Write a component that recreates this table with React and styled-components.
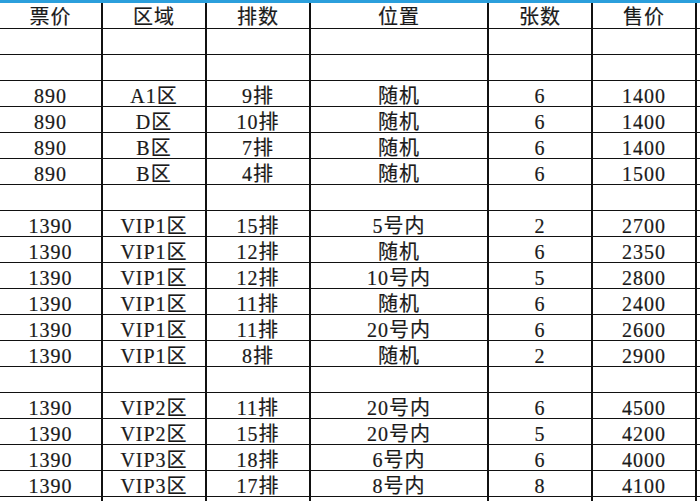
import React from "react";
import styled, { createGlobalStyle } from "styled-components";

const Global = createGlobalStyle`
  html, body { margin: 0; padding: 0; background: #fff; overflow: hidden; }
  body { font-family: "Liberation Serif", "Noto Sans CJK SC", serif; }
`;

const Page = styled.div`
  width: 700px;
  height: 501px;
  overflow: hidden;
  background: #fff;
  border-top: 3px solid #2b9fdc;
`;

const Sheet = styled.div`
  display: grid;
  grid-template-columns: 103px 104px 104px 178px 104px 104px 1fr;
  grid-auto-rows: 26px;
`;

const Cell = styled.div`
  box-sizing: border-box;
  border-right: 2px solid #111;
  border-bottom: 1px solid #111;
  display: flex;
  align-items: center;
  justify-content: center;
  padding-top: ${(p) => (p.$head ? "3px" : "5px")};
  font-size: 20px;
  line-height: 1;
  color: #1a1a1a;
  white-space: nowrap;
  font-weight: 400;
  letter-spacing: 1px;
  -webkit-text-stroke: 0.2px #1a1a1a;
`;

const Tail = styled(Cell)`
  border-right: none;
`;

const head = ["票价", "区域", "排数", "位置", "张数", "售价"];
const rows = [
  null,
  null,
  ["890", "A1区", "9排", "随机", "6", "1400"],
  ["890", "D区", "10排", "随机", "6", "1400"],
  ["890", "B区", "7排", "随机", "6", "1400"],
  ["890", "B区", "4排", "随机", "6", "1500"],
  null,
  ["1390", "VIP1区", "15排", "5号内", "2", "2700"],
  ["1390", "VIP1区", "12排", "随机", "6", "2350"],
  ["1390", "VIP1区", "12排", "10号内", "5", "2800"],
  ["1390", "VIP1区", "11排", "随机", "6", "2400"],
  ["1390", "VIP1区", "11排", "20号内", "6", "2600"],
  ["1390", "VIP1区", "8排", "随机", "2", "2900"],
  null,
  ["1390", "VIP2区", "11排", "20号内", "6", "4500"],
  ["1390", "VIP2区", "15排", "20号内", "5", "4200"],
  ["1390", "VIP3区", "18排", "6号内", "6", "4000"],
  ["1390", "VIP3区", "17排", "8号内", "8", "4100"],
  null,
];

export default function App() {
  return (
    <>
      <Global />
      <Page>
        <Sheet>
          {head.map((h) => (
            <Cell key={h} $head>
              {h}
            </Cell>
          ))}
          <Tail $head />
          {rows.map((r, i) => (
            <React.Fragment key={i}>
              {(r || ["", "", "", "", "", ""]).map((v, j) => (
                <Cell key={j}>{v}</Cell>
              ))}
              <Tail />
            </React.Fragment>
          ))}
        </Sheet>
      </Page>
    </>
  );
}
